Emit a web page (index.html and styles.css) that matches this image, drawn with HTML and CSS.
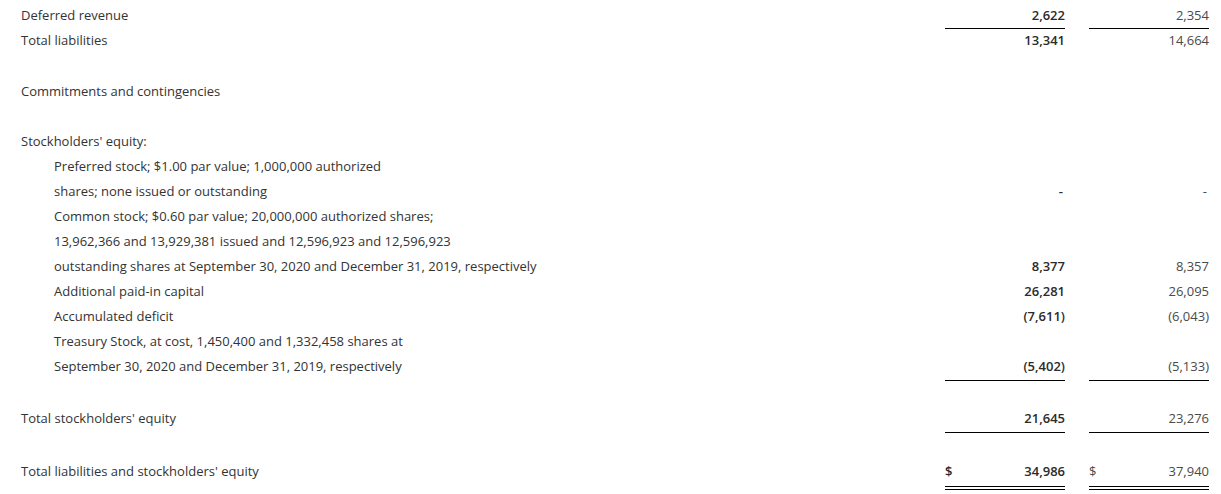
FILE: index.html
```html
<!DOCTYPE html>
<html>
<head>
<meta charset="utf-8">
<link rel="stylesheet" href="styles.css">
</head>
<body>
<div class="sheet">
  <div class="row">
    <div class="label">Deferred revenue</div>
    <div class="val cur under">2,622</div>
    <div class="val prev under">2,354</div>
  </div>
  <div class="row">
    <div class="label">Total liabilities</div>
    <div class="val cur">13,341</div>
    <div class="val prev">14,664</div>
  </div>
  <div class="row blank"></div>
  <div class="row">
    <div class="label">Commitments and contingencies</div>
  </div>
  <div class="row"></div>
  <div class="row">
    <div class="label">Stockholders' equity:</div>
  </div>
  <div class="row">
    <div class="label indent">Preferred stock; $1.00 par value; 1,000,000 authorized</div>
  </div>
  <div class="row">
    <div class="label indent">shares; none issued or outstanding</div>
    <div class="val cur dash">-</div>
    <div class="val prev dash">-</div>
  </div>
  <div class="row">
    <div class="label indent">Common stock; $0.60 par value; 20,000,000 authorized shares;</div>
  </div>
  <div class="row">
    <div class="label indent">13,962,366 and 13,929,381 issued and 12,596,923 and 12,596,923</div>
  </div>
  <div class="row">
    <div class="label indent">outstanding shares at September 30, 2020 and December 31, 2019, respectively</div>
    <div class="val cur">8,377</div>
    <div class="val prev">8,357</div>
  </div>
  <div class="row">
    <div class="label indent">Additional paid-in capital</div>
    <div class="val cur">26,281</div>
    <div class="val prev">26,095</div>
  </div>
  <div class="row">
    <div class="label indent">Accumulated deficit</div>
    <div class="val cur">(7,611)</div>
    <div class="val prev">(6,043)</div>
  </div>
  <div class="row">
    <div class="label indent">Treasury Stock, at cost, 1,450,400 and 1,332,458 shares at</div>
  </div>
  <div class="row tall">
    <div class="label indent">September 30, 2020 and December 31, 2019, respectively</div>
    <div class="val cur under">(5,402)</div>
    <div class="val prev under">(5,133)</div>
  </div>
  <div class="spacer"></div>
  <div class="row tall">
    <div class="label">Total stockholders' equity</div>
    <div class="val cur under">21,645</div>
    <div class="val prev under">23,276</div>
  </div>
  <div class="spacer2"></div>
  <div class="row final">
    <div class="label">Total liabilities and stockholders' equity</div>
    <div class="val cur double"><span class="sym">$</span><span>34,986</span></div>
    <div class="val prev double"><span class="sym">$</span><span>37,940</span></div>
  </div>
</div>
</body>
</html>
```

FILE: styles.css
```css
html, body {
  margin: 0;
  padding: 0;
  background: #ffffff;
}
body {
  font-family: "Open Sans", "Lato", sans-serif;
  font-size: 13px;
  color: #333333;
}
.sheet {
  padding: 4px 12px 0 21px;
}
.row {
  display: flex;
  height: 25px;
  align-items: stretch;
}
.row.blank { height: 26px; }
.row.tall { height: 26px; }
.row.final { height: 30px; }
.spacer { height: 26px; }
.spacer2 { height: 27px; }
.label {
  flex: 1;
  line-height: 23px;
  white-space: nowrap;
}
.label.indent {
  padding-left: 33px;
}
.val {
  width: 120px;
  box-sizing: border-box;
  text-align: right;
  line-height: 22px;
  display: flex;
  justify-content: flex-end;
}
.val.cur {
  font-weight: 600;
  color: #2b2b2b;
}
.val.prev {
  margin-left: 24px;
  color: #4a4a4a;
}
.val.under {
  border-bottom: 1px solid #000;
}
.val.double {
  border-bottom: 4px double #000;
  justify-content: space-between;
}
.val.dash {
  padding-right: 2px;
}
```
